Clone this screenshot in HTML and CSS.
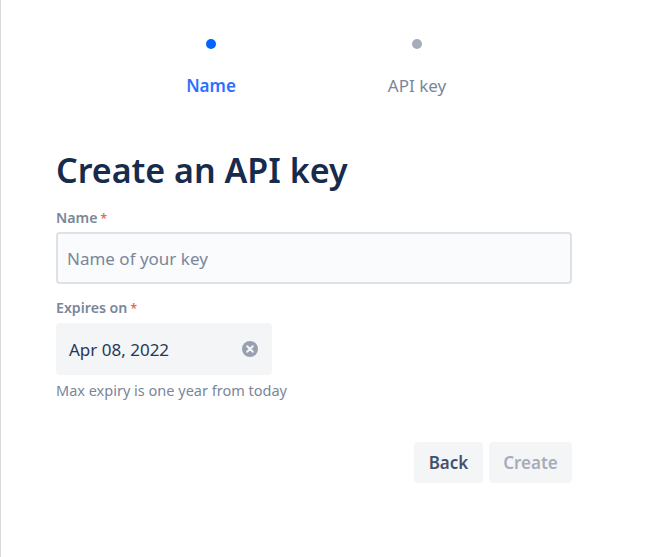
FILE: index.html
```html
<!DOCTYPE html>
<html lang="en">
<head>
<meta charset="utf-8">
<title>Create an API key</title>
<link rel="stylesheet" href="styles.css">
</head>
<body>
<main class="panel">
  <ol class="steps">
    <li class="step step-active"><span class="dot"></span><span class="step-label">Name</span></li>
    <li class="step"><span class="dot"></span><span class="step-label">API key</span></li>
  </ol>
  <form class="form">
    <h1 class="title">Create an API key</h1>
    <label class="label" for="key-name">Name<span class="req">*</span></label>
    <input class="text-input" id="key-name" type="text" placeholder="Name of your key">
    <label class="label label-expiry">Expires on<span class="req">*</span></label>
    <div class="date-field">
      <span>Apr 08, 2022</span>
      <svg class="clear" width="16" height="16" viewBox="0 0 16 16"><circle cx="8" cy="8" r="8" fill="#97a0af"/><path d="M5.2 5.2l5.6 5.6M10.8 5.2l-5.6 5.6" stroke="#f4f5f7" stroke-width="2" stroke-linecap="round"/></svg>
    </div>
    <p class="help">Max expiry is one year from today</p>
    <div class="actions">
      <button class="btn btn-back" type="button">Back</button>
      <button class="btn btn-create" type="button">Create</button>
    </div>
  </form>
</main>
</body>
</html>
```
FILE: styles.css
```css
* { box-sizing: border-box; }
html, body { margin: 0; height: 100%; }
body { background: #fff; font-family: "Noto Sans", Roboto, sans-serif; color: #172b4d; }
.panel { height: 557px; border-left: 1px solid #d9d9d9; padding: 39px 83px 0 55px; }
.steps { list-style: none; margin: 0 0 0 52px; padding: 0; display: flex; width: 412px; }
.step { width: 206px; display: flex; flex-direction: column; align-items: center; gap: 27px; color: #7a869a; font-size: 17px; line-height: 20px; }
.dot { width: 10px; height: 10px; border-radius: 50%; background: #a5adba; }
.step-active { color: #2e6eff; font-weight: 600; }
.step-active .dot { background: #0065ff; }
.form { margin-top: 53px; width: 516px; }
.title { margin: 0; font-size: 34px; line-height: 42px; font-weight: 600; color: #172b4d; }
.label { display: block; margin-top: 18px; font-size: 14.2px; line-height: 18px; font-weight: 600; color: #7a869a; }
.label-expiry { margin-top: 15px; }
.req { color: #de350b; margin-left: 3px; font-size: 12px; line-height: 1; opacity: .75; }
.text-input { display: block; width: 516px; height: 52px; margin-top: 5px; padding: 0 9px; border: 2px solid #dfe1e6; border-radius: 4px; background: #fafbfc; font: 400 17px "Noto Sans", sans-serif; color: #172b4d; }
.text-input::placeholder { color: #7a869a; opacity: 1; }
.date-field { display: flex; align-items: center; justify-content: space-between; width: 216px; height: 52px; margin-top: 6px; padding: 0 14px 0 13px; background: #f4f5f7; border-radius: 4px; font-size: 17px; color: #253858; }
.help { margin: 6px 0 0; font-size: 14.5px; line-height: 18px; color: #7a869a; }
.actions { display: flex; justify-content: flex-end; gap: 6px; margin-top: 43px; }
.btn { height: 41px; border: 0; border-radius: 4px; background: #f4f5f7; font: 600 17px "Noto Sans", sans-serif; padding: 0; }
.btn-back { width: 69px; color: #42526e; }
.btn-create { width: 83px; color: #a5adba; }
```
